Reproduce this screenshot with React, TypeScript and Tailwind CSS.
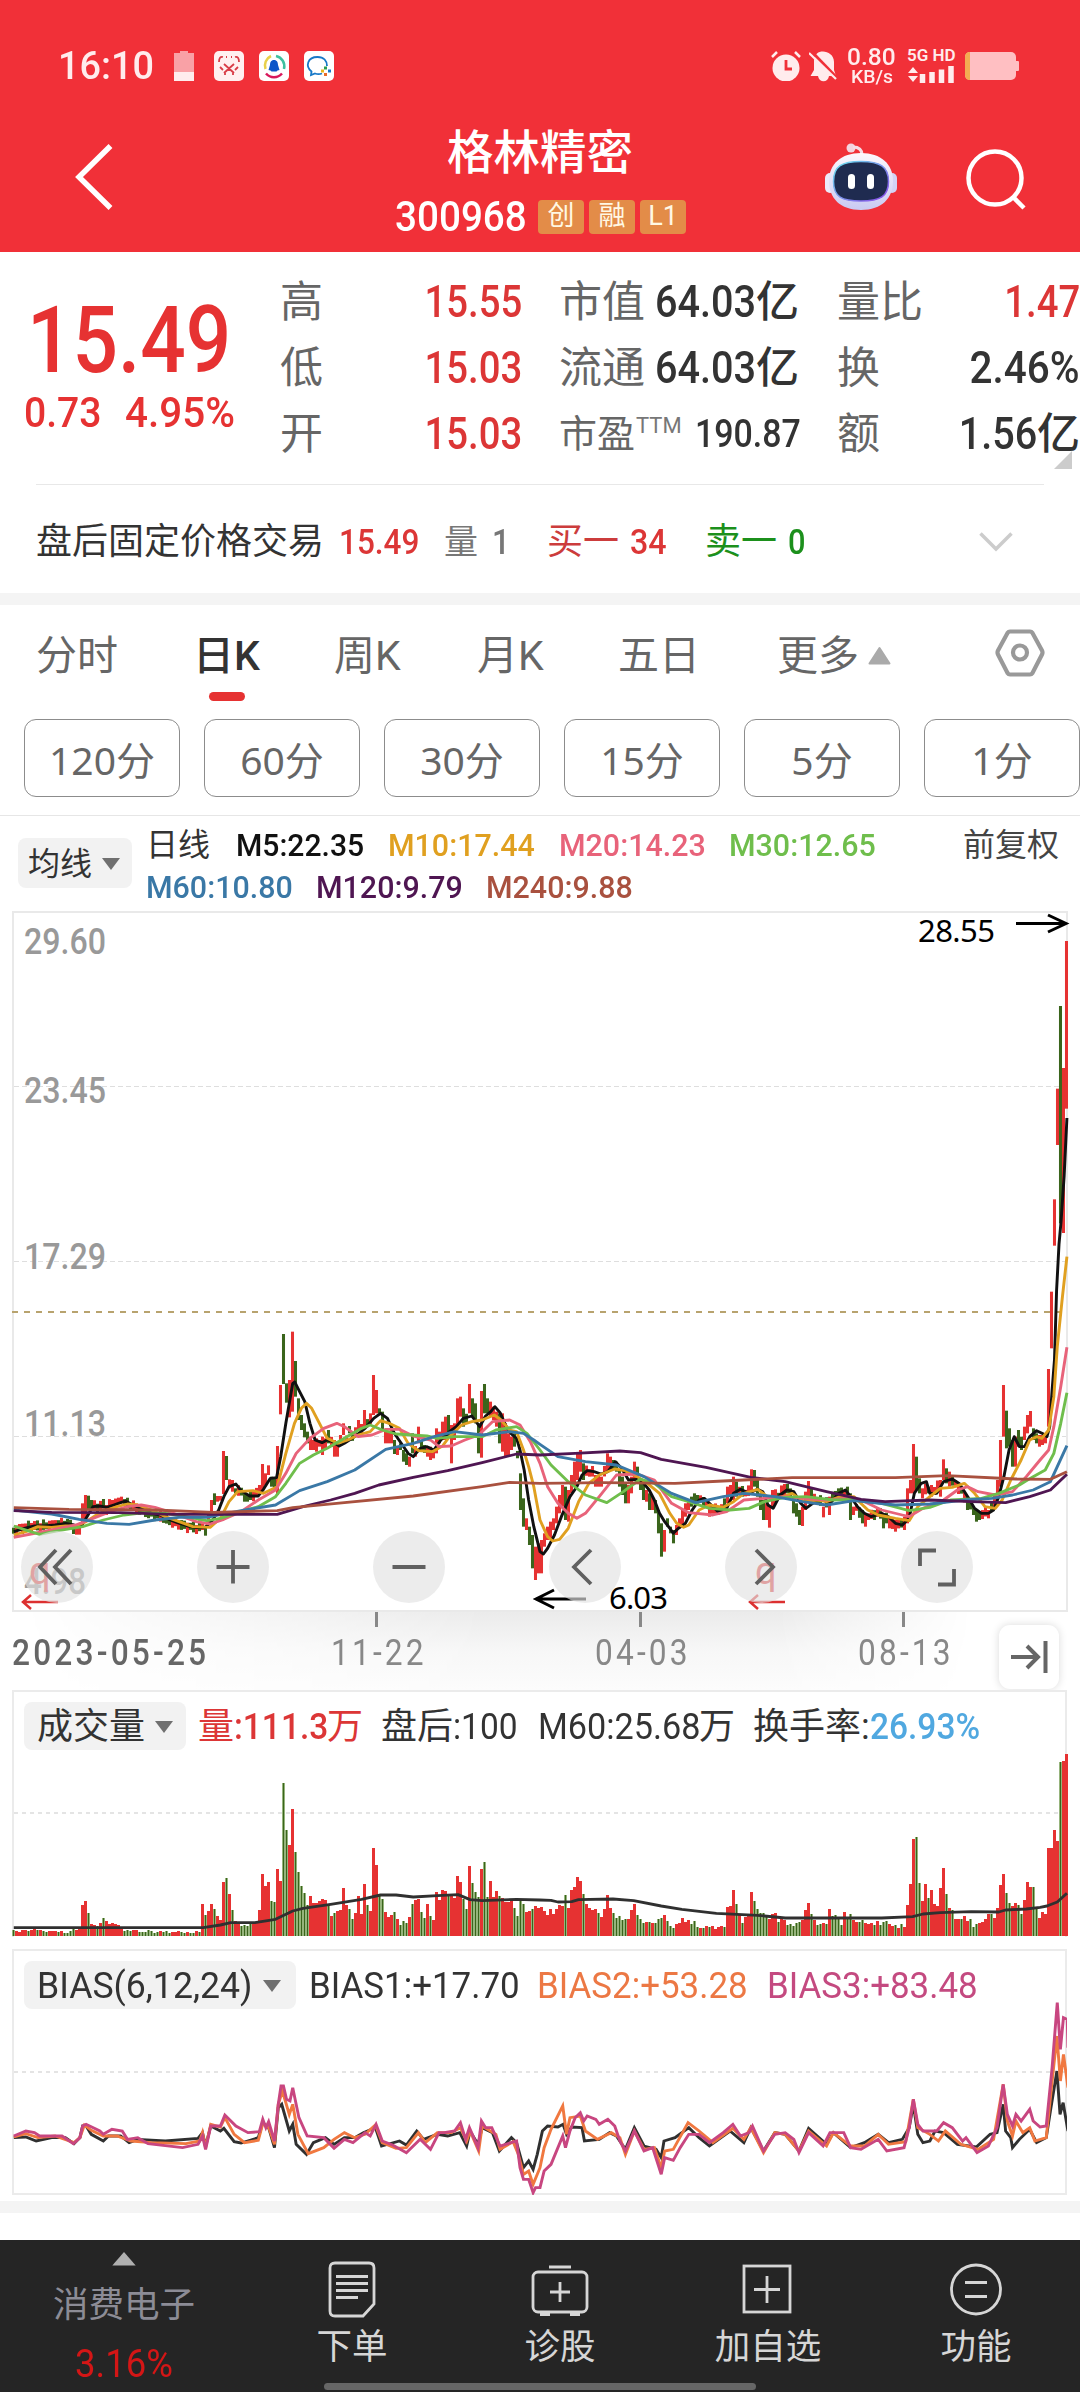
import React from 'react';
import clsx from 'clsx';

type Bar = [index: number, top: number, bottom: number, down?: 1];

// 图表坐标系：横向每单位 0.3444px，纵向每单位 1/3px
const UNIT_X = 0.34439;
const UNIT_Y = 1 / 3;
const BAR_STEP = 8.711;
const BAR_START = 39.2;
const BAR_COUNT = 352;

const RED = '#e63232';
const GREEN = '#3a651c';

const MA5 =
  '40,755 70,745 100,738 130,738 160,735 190,730 215,735 235,740 250,715 270,680 290,678 310,682 330,675 350,668 365,663 385,675 410,685 440,700 465,705 490,718 515,728 545,738 570,743 595,742 615,725 635,690 650,650 665,620 685,612 700,632 725,648 750,648 765,628 785,595 803,593 815,530 830,430 850,310 856,306 870,335 885,365 900,430 915,480 935,488 950,480 965,485 985,498 1000,490 1030,470 1060,445 1085,415 1105,400 1125,415 1145,460 1165,490 1185,520 1200,530 1220,505 1240,500 1260,510 1280,480 1305,455 1325,440 1345,415 1370,408 1393,440 1410,408 1425,395 1437,380 1452,398 1470,440 1485,462 1500,475 1510,510 1522,570 1535,660 1550,740 1568,815 1578,822 1590,805 1610,765 1630,710 1655,650 1675,620 1690,585 1705,572 1725,575 1745,582 1765,575 1787,545 1805,565 1825,600 1850,598 1865,605 1885,630 1900,660 1915,700 1930,725 1945,745 1955,760 1970,745 1990,730 2010,690 2030,660 2045,655 2065,675 2085,695 2110,685 2130,640 2150,628 2175,640 2200,628 2215,635 2230,675 2245,685 2265,645 2285,630 2305,635 2325,670 2340,685 2360,670 2380,655 2400,665 2415,665 2435,640 2455,630 2470,650 2490,680 2510,700 2530,710 2560,700 2580,710 2600,730 2620,735 2640,715 2655,640 2675,610 2690,605 2700,640 2720,640 2740,605 2765,597 2785,610 2810,650 2830,685 2850,700 2870,700 2885,690 2900,650 2915,590 2930,510 2945,470 2960,500 2975,500 2990,470 3010,452 3030,462 3040,470 3048,440 3055,330 3062,238 3068,31 3075,-107 3081,-176 3090,-313 3098,-486';

const MA_LINES = [
  {
    name: 'MA10',
    color: '#e0a020',
    points:
      '40,765 75,755 110,740 150,742 190,738 220,738 250,725 280,705 310,690 340,680 370,672 400,675 440,690 480,710 520,725 560,740 610,742 640,715 665,665 690,635 735,632 765,640 805,620 830,520 855,430 875,385 890,370 905,385 925,425 950,475 980,490 1010,480 1040,465 1075,455 1105,422 1130,430 1160,445 1185,490 1215,512 1255,515 1285,498 1305,470 1340,435 1370,425 1400,420 1435,405 1455,420 1480,450 1500,455 1520,510 1535,560 1550,620 1568,720 1590,770 1605,783 1625,778 1650,745 1680,665 1710,610 1740,585 1785,567 1815,572 1850,590 1880,610 1915,640 1945,700 1965,730 1985,742 2000,735 2030,690 2060,675 2100,682 2130,665 2160,640 2200,628 2235,655 2275,650 2300,640 2335,665 2375,660 2400,665 2440,650 2480,650 2520,690 2550,705 2600,715 2640,722 2665,680 2700,650 2730,625 2765,622 2800,610 2830,640 2860,680 2890,685 2910,660 2935,600 2965,540 2990,480 3010,470 3025,475 3045,450 3060,350 3070,200 3085,50 3098,-70',
  },
  {
    name: 'MA20',
    color: '#e8637a',
    points:
      '40,772 90,762 150,750 220,735 270,715 320,695 370,680 410,675 450,682 490,695 530,710 570,725 610,732 650,718 700,695 750,660 800,630 830,580 860,520 900,475 940,445 978,430 1000,440 1040,470 1080,465 1120,448 1160,448 1200,468 1250,480 1275,500 1310,498 1350,480 1390,465 1430,425 1480,420 1510,435 1540,485 1568,550 1590,620 1620,670 1650,700 1675,715 1700,700 1740,650 1790,585 1850,582 1900,600 1950,670 2000,698 2070,705 2110,695 2160,660 2220,655 2280,650 2330,655 2400,660 2450,655 2500,660 2560,690 2620,705 2640,710 2680,685 2740,660 2780,630 2810,620 2840,635 2890,645 2940,635 2980,590 3020,540 3045,510 3060,440 3080,320 3098,202',
  },
  {
    name: 'MA30',
    color: '#6fbe4c',
    points:
      '40,738 80,752 115,763 170,752 240,740 300,720 360,705 420,698 480,700 540,710 600,722 640,715 700,695 750,680 800,650 830,610 870,550 910,525 950,505 1000,475 1050,445 1075,435 1110,450 1150,462 1240,468 1270,475 1320,470 1400,470 1440,450 1500,440 1530,460 1568,510 1600,555 1650,605 1700,645 1762,668 1810,635 1860,597 1900,610 1950,650 2000,665 2060,685 2120,690 2175,685 2220,665 2280,652 2340,650 2420,660 2480,658 2560,670 2640,692 2700,682 2760,660 2850,655 2900,640 2960,615 3000,590 3035,570 3060,520 3080,430 3098,338',
  },
  {
    name: 'MA60',
    color: '#3a78a6',
    points:
      '40,690 150,702 230,718 310,730 375,733 450,720 520,712 600,712 700,692 800,675 870,632 950,605 1030,570 1120,508 1200,490 1260,470 1320,455 1400,465 1480,455 1520,460 1550,480 1568,493 1620,530 1700,545 1790,555 1870,590 1950,640 2020,668 2100,650 2160,640 2250,650 2330,665 2400,675 2480,662 2600,675 2700,672 2800,660 2880,655 2940,645 3000,630 3050,605 3070,560 3098,497',
  },
  {
    name: 'MA120',
    color: '#4f1652',
    points:
      '40,692 150,697 350,698 500,703 700,703 805,703 880,680 960,660 1030,640 1100,615 1200,592 1300,572 1400,548 1500,522 1568,525 1670,520 1800,513 1860,518 1920,538 2050,562 2180,592 2280,605 2400,635 2500,658 2570,665 2700,660 2820,665 2920,668 2990,650 3050,630 3098,583',
  },
  {
    name: 'MA240',
    color: '#a9513f',
    points:
      '40,683 200,688 450,690 620,697 805,692 850,683 1000,668 1200,648 1400,620 1480,607 1568,610 1750,608 1960,610 2100,603 2300,593 2600,593 2750,587 2950,597 3050,598 3098,575',
  },
];

// 波动较大的 K 线，其余按 MA5 走势生成
const KEY_CANDLES: Bar[] = [
  [20, 735, 762, 1], [21, 740, 764], [22, 735, 764], [23, 670, 740], [24, 645, 720], [25, 647, 690, 1], [26, 660, 690, 1], [30, 657, 685, 1], [31, 675, 705], [33, 660, 690], [36, 650, 670],
  [61, 735, 762], [64, 738, 767, 1], [66, 660, 710], [67, 640, 675, 1], [68, 648, 665], [69, 648, 662], [70, 513, 642], [71, 528, 600, 1], [72, 598, 625], [73, 600, 635], [74, 625, 640, 1], [77, 640, 665, 1], [78, 645, 665, 1], [82, 615, 640], [83, 552, 630], [84, 580, 615], [85, 556, 585], [86, 590, 620, 1], [87, 595, 625, 1],
  [88, 498, 645], [89, 315, 403], [90, 162, 312, 1], [91, 310, 368, 1], [92, 300, 412], [93, 155, 395], [94, 243, 350, 1], [95, 355, 420, 1], [96, 405, 450, 1], [97, 430, 472, 1], [98, 455, 490, 1], [99, 470, 510], [100, 480, 510], [101, 475, 515], [102, 480, 500], [103, 470, 525], [104, 475, 505], [105, 450, 490, 1], [107, 480, 530], [108, 495, 530], [109, 465, 480], [110, 430, 465], [112, 438, 460, 1], [115, 420, 450], [117, 390, 440],
  [120, 285, 405], [121, 330, 400], [122, 385, 400, 1], [123, 395, 450, 1], [124, 450, 490], [125, 455, 490], [126, 450, 490], [127, 480, 522, 1], [128, 500, 525], [129, 490, 510, 1], [130, 510, 545, 1], [131, 520, 555, 1], [132, 530, 560], [133, 460, 520, 1], [135, 440, 490], [138, 500, 530], [139, 500, 540], [140, 515, 535], [141, 445, 520], [142, 455, 490], [143, 425, 480], [144, 410, 480], [145, 405, 470, 1], [146, 435, 550], [147, 430, 480], [148, 355, 440], [149, 350, 410], [150, 385, 440, 1],
  [152, 312, 400], [153, 355, 410, 1], [154, 370, 430, 1], [155, 430, 520, 1], [156, 333, 533], [157, 312, 400, 1], [158, 355, 400, 1], [159, 365, 410], [160, 380, 420], [161, 395, 440], [162, 400, 490, 1], [163, 400, 515], [164, 430, 530], [165, 460, 525], [166, 470, 510], [167, 460, 500, 1],
  [169, 580, 690, 1], [170, 655, 740, 1], [171, 715, 750], [172, 740, 795, 1], [173, 765, 865, 1], [174, 800, 900], [175, 790, 880], [176, 780, 880], [177, 760, 800], [178, 740, 780], [179, 725, 775], [180, 715, 750], [181, 680, 730], [182, 645, 700], [183, 615, 680], [184, 620, 720, 1], [185, 630, 725], [186, 585, 640], [187, 545, 620], [188, 520, 600], [189, 510, 575], [190, 550, 600, 1], [194, 585, 620], [195, 585, 620], [196, 590, 620], [198, 520, 575], [199, 530, 570], [200, 540, 570, 1], [201, 545, 575, 1], [202, 570, 620, 1], [203, 590, 645, 1], [204, 610, 670, 1], [205, 615, 670], [206, 590, 640], [207, 545, 600], [208, 560, 600, 1], [209, 600, 630, 1], [210, 610, 660, 1], [211, 630, 665], [212, 640, 690, 1], [213, 650, 690], [214, 660, 700, 1], [215, 690, 760, 1], [216, 730, 830, 1], [217, 750, 815], [218, 715, 740, 1], [219, 740, 760, 1], [220, 750, 790, 1], [221, 735, 765], [222, 715, 745], [223, 690, 735], [224, 670, 710], [225, 660, 690], [226, 650, 680, 1], [227, 640, 665, 1], [228, 645, 665, 1], [232, 670, 710],
  [238, 620, 670], [239, 615, 650], [240, 590, 660], [241, 605, 650, 1], [246, 568, 630], [247, 570, 620, 1], [248, 600, 650, 1], [249, 640, 690, 1], [250, 660, 720, 1], [251, 670, 720], [252, 680, 743], [253, 630, 680], [254, 628, 670], [257, 612, 650], [258, 612, 640, 1], [260, 650, 700, 1], [261, 670, 710, 1], [262, 690, 735, 1], [263, 680, 738], [264, 635, 690], [265, 603, 650], [266, 625, 660, 1], [270, 680, 712], [272, 650, 705], [275, 625, 660, 1], [278, 620, 660, 1], [279, 640, 720, 1], [280, 680, 705], [283, 690, 730, 1], [284, 700, 740], [285, 700, 720], [288, 685, 710], [290, 700, 745, 1], [292, 715, 745], [294, 720, 755], [297, 710, 750], [298, 625, 730], [299, 600, 640],
  [300, 492, 640], [301, 530, 630, 1], [302, 595, 640, 1], [303, 625, 655], [306, 615, 650], [309, 600, 650], [310, 538, 600], [311, 565, 610, 1], [312, 575, 620], [318, 650, 690, 1], [320, 680, 705, 1], [321, 690, 725, 1], [322, 695, 720, 1], [325, 690, 715], [327, 640, 680], [328, 600, 660], [329, 480, 620], [330, 315, 470], [331, 392, 505, 1], [332, 445, 500, 1], [333, 480, 560, 1], [334, 470, 560], [335, 450, 500, 1], [336, 470, 510, 1], [337, 440, 480], [338, 405, 460], [339, 393, 440], [340, 445, 480, 1], [341, 460, 490, 1], [342, 465, 500], [343, 465, 495], [344, 460, 490],
  [345, 267, 440], [346, 35, 205], [347, -242, -103], [348, -574, -405], [349, -822, -170, 1], [350, -636, -141], [351, -1017, -514],
];

// 成交量柱高，负数为阴线
const VOLUMES = [
  -6, 5, 4, 6, 6, -5, 6, 7, -6, 6, -5, -4, 5, 5, 5, -4, 5, -3, -3, -5, -7, 6, 7, 31, 35, -23, 12, 11, -10, 13, -18, 15, 12, 13, 12, 11, 9, -5, -6, -5, 6, 6, -4, -4, -4, -6, -5, -3, -4, 5, -4, -5, -3, 4, 4, 5, -4, -3, 4, -3, -3, 5, -4,
  32, -21, 25, 32, -27, 20, 16, 54, -58, 42, -26, 15, 14, -10, -11, -10, -12, 13, 14, 26, 62, 50, 54, -35, -34, 67, 55, -153, -106, 91, 127, -84, -64, -50, -43, -31, 40, 33, 33, 35, 37, 36, -31, 20, -23, 25, 26, 48, 31, -27, -17, 23, 40, 22, 52, -31, 25, 88, 71, -41, -37, 24, 19, 21, -24, 17, -11, -15, -13, 19, -32, 36, 37, -24, -18, 32, -20, 16, 44, 36, 46, 45, -42, 41, 38, 60, 54, -37, -27, 70, -53, -44, -39, 67, -74, -39, 55, 39, 45, -40, 38, 34, 34, 36, -28, -20, -35, -32, 24, 25, -27, 30, 28,
  29, 25, 21, 27, 22, 27, 31, 30, -41, 28, 46, 49, 59, 55, -42, 32, 28, 26, 27, -23, 19, 27, 41, 28, -23, -18, -20, -16, -17, 17, 26, 32, -21, -17, -13, 14, -14, 13, -13, -17, -18, 21, -15, -10, -8, 12, 13, 18, 14, 16, -12, -15, -9, 8, -8, 10, -9, 10, 7, 9, 10, -9, 29, 30, 46, -32, 21, -13, 19, 21, 44, -35, -27, -23, -23, -21, 17, 22, 23, -14, 18, 16, -11, -12, -10, -13, -14, 16, 26, 33, -22, 16, -11, -12, 13, -12, 27, -20, -21, -17, -11, 24, -19, -22, 16, 14, -14, -16, 13, 12, 13, -11, 15, -11, -14, -15, 12, 10, -11, 8, -12, 9, 31, 52,
  97, -99, -53, 35, 52, -38, 46, 32, 30, 48, 68, -42, 28, -26, 17, 17, -17, 20, 15, -17, -9, -12, 13, 14, 17, 22, -22, 18, 28, 51, 62, -43, -33, 30, 33, -31, -22, 36, 54, 49, -49, -27, 18, 24, 22, 88, 88, 106, 95, -174, 175, 182,
];

const VOLUME_MA =
  '40,713 590,713 640,705 670,698 740,698 800,688 850,663 880,655 960,643 1050,628 1105,615 1150,615 1200,621 1270,617 1330,614 1365,629 1400,632 1500,628 1568,630 1600,631 1620,636 1660,635 1680,629 1780,627 1840,632 1920,648 1980,658 2080,670 2200,676 2280,684 2560,684 2650,680 2680,672 2730,668 2820,665 2900,666 2920,660 2980,657 3020,652 3040,648 3070,636 3098,610';

const BIAS_LINES = [
  {
    name: 'BIAS1',
    color: '#303030',
    points:
      '40,1340 75,1338 105,1350 150,1340 190,1340 215,1358 232,1340 240,1305 250,1305 265,1330 300,1350 315,1335 350,1335 375,1355 400,1345 480,1350 575,1342 588,1325 597,1365 612,1305 640,1320 650,1312 680,1352 700,1356 750,1340 763,1295 780,1310 797,1370 808,1250 818,1240 840,1320 850,1300 860,1360 890,1390 910,1355 945,1340 970,1360 1000,1340 1030,1340 1055,1325 1090,1310 1108,1365 1160,1350 1180,1362 1210,1320 1230,1345 1270,1330 1300,1335 1335,1325 1355,1365 1365,1320 1388,1360 1400,1310 1430,1325 1450,1380 1485,1340 1500,1355 1520,1430 1535,1410 1548,1435 1560,1390 1575,1320 1590,1305 1620,1308 1635,1300 1645,1330 1660,1308 1690,1310 1697,1350 1740,1345 1770,1325 1790,1335 1816,1375 1842,1310 1870,1365 1905,1375 1920,1400 1928,1350 1960,1340 2000,1310 2030,1340 2060,1365 2120,1320 2160,1355 2180,1310 2217,1380 2250,1325 2280,1330 2320,1380 2348,1312 2400,1360 2420,1325 2470,1370 2510,1355 2550,1330 2580,1355 2620,1345 2640,1310 2652,1240 2665,1330 2680,1355 2700,1350 2715,1320 2740,1325 2780,1360 2835,1368 2875,1330 2895,1325 2913,1240 2920,1320 2935,1340 2940,1370 2960,1345 2990,1315 3010,1355 3038,1340 3050,1260 3069,1140 3078,1270 3087,1235 3101,1320',
  },
  {
    name: 'BIAS2',
    color: '#f07840',
    points:
      '40,1338 75,1328 110,1340 160,1335 215,1355 232,1340 245,1302 265,1318 300,1335 340,1335 380,1350 440,1355 540,1358 580,1350 588,1325 597,1370 612,1300 640,1308 653,1280 680,1330 710,1355 750,1348 763,1298 780,1308 797,1360 808,1240 820,1200 840,1270 850,1240 865,1330 895,1388 940,1370 970,1345 1000,1325 1030,1340 1060,1330 1090,1302 1110,1355 1150,1372 1180,1370 1215,1325 1235,1355 1270,1325 1310,1325 1337,1310 1355,1350 1365,1320 1390,1380 1400,1305 1440,1330 1452,1375 1490,1352 1505,1390 1520,1450 1535,1440 1548,1480 1568,1430 1580,1370 1600,1315 1634,1245 1645,1330 1655,1280 1685,1275 1700,1320 1735,1345 1775,1325 1800,1340 1816,1390 1842,1320 1870,1375 1900,1370 1920,1430 1930,1380 1955,1375 1998,1295 2030,1320 2070,1355 2128,1312 2160,1345 2180,1310 2217,1385 2250,1325 2280,1330 2320,1380 2348,1320 2400,1365 2420,1325 2470,1365 2510,1365 2550,1330 2580,1360 2630,1352 2652,1225 2665,1310 2700,1330 2725,1350 2745,1320 2790,1360 2840,1375 2885,1345 2913,1180 2925,1290 2940,1335 2950,1290 2970,1325 2990,1310 3005,1350 3038,1340 3050,1220 3069,1035 3079,1170 3088,1090 3101,1190',
  },
  {
    name: 'BIAS3',
    color: '#c84680',
    points:
      '40,1335 75,1320 100,1325 115,1335 180,1335 213,1358 232,1340 240,1305 250,1300 290,1320 300,1330 325,1315 355,1320 370,1345 400,1340 430,1358 530,1370 575,1360 588,1335 597,1375 612,1305 640,1305 653,1272 685,1305 720,1325 753,1322 763,1285 772,1310 780,1292 797,1350 808,1240 816,1185 823,1185 832,1225 842,1230 850,1190 868,1280 892,1335 940,1340 970,1372 1000,1345 1025,1355 1060,1325 1075,1335 1092,1300 1110,1350 1140,1362 1180,1385 1220,1345 1250,1375 1275,1325 1290,1325 1320,1320 1337,1295 1352,1345 1363,1310 1388,1370 1398,1290 1410,1310 1428,1310 1452,1365 1500,1350 1510,1430 1520,1465 1535,1465 1548,1505 1555,1490 1568,1490 1580,1440 1600,1420 1634,1335 1642,1370 1655,1320 1670,1280 1685,1265 1695,1290 1705,1275 1730,1285 1740,1300 1765,1285 1785,1305 1800,1350 1816,1380 1842,1320 1870,1380 1895,1370 1920,1450 1930,1400 1955,1408 1975,1370 2000,1330 2030,1330 2060,1355 2100,1325 2128,1300 2150,1335 2175,1325 2185,1305 2217,1380 2250,1330 2280,1325 2305,1345 2320,1385 2348,1325 2390,1365 2410,1325 2450,1325 2470,1370 2500,1375 2550,1345 2575,1380 2625,1370 2640,1310 2652,1225 2665,1300 2680,1320 2720,1320 2740,1295 2765,1310 2795,1350 2805,1340 2837,1385 2870,1365 2895,1310 2913,1180 2925,1270 2940,1305 2950,1270 2965,1290 2990,1255 3000,1290 3020,1308 3038,1305 3055,1130 3070,935 3079,1075 3088,980 3099,985 3101,1070',
  },
];

const parsePoints = (points: string) => points.split(' ').map((p) => p.split(',').map(Number));
const ma5Points = parsePoints(MA5);

const ma5At = (x: number) => {
  const next = ma5Points.findIndex((p) => p[0] >= x);
  if (next <= 0) return ma5Points[0][1];
  const [x0, y0] = ma5Points[next - 1];
  const [x1, y1] = ma5Points[next];
  return y0 + ((y1 - y0) * (x - x0)) / (x1 - x0);
};

const buildCandles = (): Bar[] => {
  const keys = new Map(KEY_CANDLES.map((c) => [c[0], c]));
  return Array.from({ length: BAR_COUNT }, (_, i) => {
    const key = keys.get(i);
    if (key) return key;
    const x = BAR_START + i * BAR_STEP;
    const mid = ma5At(x) + 0.5 * (ma5At(x + 18) - ma5At(x)) + Math.sin(i * 2.3) * 4;
    const half = 9 + Math.abs(Math.sin(i * 1.7)) * 7;
    return VOLUMES[i] < 0 ? [i, mid - half, mid + half, 1] : [i, mid - half, mid + half];
  });
};

const candles = buildCandles();

interface TextProps {
  children: React.ReactNode;
  className?: string;
}

// 窄体数字
const Num: React.FC<TextProps> = ({ children, className }) => (
  <span className={clsx('inline-block whitespace-nowrap', className)}>{children}</span>
);

const StatusBar: React.FC = () => (
  <div className="flex h-[130px] items-center pt-0.5 text-[#ffeced]">
    <div className="ml-[58px] w-[116px] font-medium">
      <Num className="origin-left scale-x-[0.97] text-[39px]">16:10</Num>
    </div>
    <svg width="20" height="30" viewBox="0 0 20 30">
      <path d="M0 2h6V0h8v2h6v28H0z" fill="#f9a1a6" />
      <path d="M0 21h20v9H0z" fill="#ffeced" />
    </svg>
    <svg className="ml-5" width="30" height="30" viewBox="0 0 30 30">
      <rect width="30" height="30" rx="5" fill="#fff0f0" />
      <path d="M5 11Q5 5 9 6M25 11Q25 5 21 6M12 6h1M17 6h1" stroke="#d83c46" strokeWidth="1.800" fill="none" />
      <path d="M10 13l10 9M20 13l-10 9M6 16l3 3M24 16l-3 3M15 17v3M11 22v2M19 22v2" stroke="#d83c46" strokeWidth="1.800" fill="none" />
    </svg>
    <svg className="ml-[15px]" width="30" height="30" viewBox="0 0 30 30">
      <rect width="30" height="30" rx="5" fill="#fff" />
      <path d="M12 5a10.500 10.500 0 0 0-5.500 13" stroke="#e8d04a" strokeWidth="2.500" fill="none" />
      <path d="M17 5a10.500 10.500 0 0 1 8 13" stroke="#3fc0a0" strokeWidth="2.500" fill="none" />
      <path d="M7 22.500a10.500 10.500 0 0 0 16 0" stroke="#d8185c" strokeWidth="2.500" fill="none" />
      <path d="M15 9c-3 0-4 2.500-4 5l-1.500 5 2 .5 1 1h5l1-1 2-.5L19 14c0-2.500-1-5-4-5z" fill="#0c55c8" />
    </svg>
    <svg className="ml-[15px]" width="30" height="30" viewBox="0 0 30 30">
      <rect width="30" height="30" rx="5" fill="#fff" />
      <path d="M18 22.500c-2 .8-5 .8-7 0L7 24l.5-3.500C1 15 3.500 6 13.500 6 20 6 23 10 23 15" stroke="#1678c8" strokeWidth="1.800" fill="none" />
      <path d="M21.500 15.500v3" stroke="#2a9d50" strokeWidth="3" />
      <path d="M24 20h3" stroke="#1678c8" strokeWidth="3" />
      <path d="M21.500 22v3" stroke="#e86c28" strokeWidth="3" />
      <path d="M17 20h3" stroke="#e8b820" strokeWidth="3" />
    </svg>
    <svg className="ml-[437px]" width="30" height="30" viewBox="0 0 30 30">
      <circle cx="15" cy="17" r="13.500" fill="#ffeced" />
      <path d="M1 6l5-5M29 6l-5-5" stroke="#ffeced" strokeWidth="2.500" />
      <path d="M15 9v9h6" stroke="#f03038" strokeWidth="2.800" fill="none" />
    </svg>
    <svg className="ml-2" width="28" height="31" viewBox="0 0 28 31">
      <path d="M5 9C6 3 9 .5 14 .5S25 4 25 11v8l2 6H1.500L5 19z" fill="#ffeced" />
      <path d="M9 25h11c-1 7-10 7-11 0z" fill="#ffeced" />
      <path d="M2 0l26 27" stroke="#f03038" strokeWidth="3" />
      <path d="M0 2l27 26" stroke="#ffeced" strokeWidth="2.200" />
    </svg>
    <div className="ml-2.5 flex w-[60px] flex-col font-medium">
      <Num className="origin-left scale-x-[1.02] text-[24px] leading-[20px]">0.80</Num>
      <Num className="ml-1 origin-left scale-x-[1.02] text-[19px] leading-[19px]">KB/s</Num>
    </div>
    <div className="flex w-[58px] flex-col gap-1 font-semibold">
      <Num className="text-[17px] leading-[13px]">5G HD</Num>
      <svg width="49" height="17" viewBox="0 0 49 17">
        <path d="M1 7l5-6 5 6zM1 10h10l-5 6z" fill="#ffeced" />
        <path d="M15.500 8v9M25 6v11M34.500 3.500V17M44 0v17" stroke="#ffeced" strokeWidth="5.500" />
      </svg>
    </div>
    <svg width="54" height="28" viewBox="0 0 54 28">
      <rect width="51" height="28" rx="5" fill="#ffbfc2" />
      <path d="M5 0Q0 0 0 5v18q0 5 5 5z" fill="#f3ac52" />
      <rect x="50" y="9" width="4" height="10" rx="1" fill="#ffbfc2" />
    </svg>
  </div>
);

const RobotIcon: React.FC = () => (
  <svg width="72" height="68" viewBox="0 0 72 68">
    <defs>
      <linearGradient id="robot-head" x1="0" y1="0" x2="0" y2="1">
        <stop offset="0" stopColor="#fdf8fd" />
        <stop offset="1" stopColor="#c9caf2" />
      </linearGradient>
      <linearGradient id="robot-rim" x1="0" y1="0" x2="1" y2="1">
        <stop offset="0" stopColor="#6be4f0" />
        <stop offset="1" stopColor="#8a45e8" />
      </linearGradient>
    </defs>
    <circle cx="26" cy="5" r="4.500" fill="#f3d3de" />
    <path d="M28 4q9 0 9 8" stroke="#f6dbe4" strokeWidth="3" fill="none" />
    <rect x="0" y="30" width="10" height="20" rx="5" fill="#eceafa" />
    <rect x="62" y="30" width="10" height="20" rx="5" fill="#d3d3f5" />
    <path d="M36 10c20 0 32 11 32 28S57 67 36 67 4 55 4 38s12-28 32-28z" fill="url(#robot-head)" />
    <path d="M36 18.500c19 0 27.500 5 27.500 20S55 58 36 58 8.500 54 8.500 38.500s8.500-20 27.500-20z" fill="#1f2b50" stroke="url(#robot-rim)" strokeWidth="1.500" />
    <rect x="23" y="31" width="7" height="15" rx="3.500" fill="#fff" />
    <rect x="42" y="31" width="7" height="15" rx="3.500" fill="#fff" />
  </svg>
);

const Header: React.FC = () => (
  <div className="h-[252px] shrink-0 bg-[#f13038] text-white">
    <StatusBar />
    <div className="flex">
      <div className="w-[395px] pt-[14px] pl-[75px]">
        <svg width="40" height="66" viewBox="0 0 40 66">
          <path d="M35.500 2L4 33l31.500 31" stroke="#fff" strokeWidth="5.500" fill="none" />
        </svg>
      </div>
      <div className="w-[430px]">
        <div className="pl-[52px] text-[46.500px] font-medium">格林精密</div>
        <div className="mt-[22px] flex h-9 items-center gap-[5px]">
          <div className="w-[138px] font-medium">
            <Num className="origin-left scale-x-[0.92] text-[42px]">300968</Num>
          </div>
          {['创', '融', 'L1'].map((badge) => (
            <span key={badge} className="flex h-[34px] w-[46px] items-center justify-center rounded-[4px] bg-[#e38c48] text-[27px] text-[#fff8e4]">
              {badge}
            </span>
          ))}
        </div>
      </div>
      <div className="pt-[13px]">
        <RobotIcon />
      </div>
      <svg className="mt-[17px] ml-[68px]" width="62" height="64" viewBox="0 0 62 64">
        <circle cx="30" cy="31" r="26.500" stroke="#fff" strokeWidth="4.500" fill="none" />
        <path d="M48 50l11 11" stroke="#fff" strokeWidth="4.500" />
      </svg>
    </div>
  </div>
);

const Yi: React.FC = () => <span className="text-[43px] font-medium text-[#333]">亿</span>;

const QuoteSummary: React.FC = () => (
  <div className="relative flex h-[232px] shrink-0 pt-[17px] font-medium">
    <div className="w-[280px] text-[#e63232]">
      <div className="pt-[26px] pl-[27px]">
        <Num className="origin-left scale-x-[0.87] text-[92px]">15.49</Num>
      </div>
      <div className="mt-1 flex pl-[24px]">
        <div className="w-[101px]">
          <Num className="origin-left scale-x-[0.91] text-[43px]">0.73</Num>
        </div>
        <Num className="origin-left scale-x-[0.94] text-[43px]">4.95%</Num>
      </div>
    </div>
    <div className="flex w-[242px] flex-col">
      {[['高', '15.55'], ['低', '15.03'], ['开', '15.03']].map(([label, value]) => (
        <div key={label} className="flex h-[66px] items-center justify-between">
          <span className="text-[43px] font-normal text-[#666]">{label}</span>
          <Num className="origin-right scale-x-[0.87] text-[44px] text-[#dc3636]">{value}</Num>
        </div>
      ))}
    </div>
    <div className="ml-[37px] flex w-[278px] flex-col text-[#333]">
      {['市值', '流通'].map((label) => (
        <div key={label} className="flex h-[66px] items-center">
          <span className="w-[96px] text-[43px] font-normal text-[#666]">{label}</span>
          <div className="w-[101px]">
            <Num className="origin-left scale-x-[0.9] text-[44px]">64.03</Num>
          </div>
          <Yi />
        </div>
      ))}
      <div className="flex h-[66px] items-center">
        <span className="w-[77px] text-[38px] font-normal whitespace-nowrap text-[#666]">市盈</span>
        <span className="-mt-4 w-[59px] text-[22px] font-normal text-[#777]">TTM</span>
        <Num className="origin-left scale-x-[0.87] text-[39px]">190.87</Num>
      </div>
    </div>
    <div className="flex w-[243px] flex-col text-[#333]">
      <div className="flex h-[66px] items-center justify-between">
        <span className="text-[43px] font-normal text-[#666]">量比</span>
        <Num className="origin-right scale-x-[0.87] text-[44px] text-[#dc3636]">1.47</Num>
      </div>
      <div className="flex h-[66px] items-center justify-between">
        <span className="text-[43px] font-normal text-[#666]">换</span>
        <Num className="origin-right scale-x-[0.92] text-[44px]">2.46%</Num>
      </div>
      <div className="flex h-[66px] items-center">
        <span className="flex-1 text-[43px] font-normal text-[#666]">额</span>
        <Num className="origin-right scale-x-[0.9] text-[44px]">1.56</Num>
        <Yi />
      </div>
    </div>
    <svg className="absolute right-2 bottom-[15px]" width="18" height="18">
      <path d="M18 0v18H0z" fill="#ccc" />
    </svg>
  </div>
);

const AfterHours: React.FC = () => (
  <div className="mx-9 flex h-[109px] shrink-0 items-center border-t-[1px] border-[#e8e8e8] pt-1.5 text-[36px] text-[#333]">
    <span className="w-[303px]">盘后固定价格交易</span>
    <div className="w-[105px] font-medium text-[#dc3636]">
      <Num className="origin-left scale-x-[0.9] text-[35px]">15.49</Num>
    </div>
    <span className="w-[48px] text-[34px] text-[#777]">量</span>
    <div className="w-[55px] font-medium text-[#777]">
      <Num className="origin-left scale-x-[0.9] text-[35px]">1</Num>
    </div>
    <span className="w-[83px] text-[#cc3c3c]">买一</span>
    <div className="w-[75px] font-medium text-[#dc3636]">
      <Num className="origin-left scale-x-[0.92] text-[35px]">34</Num>
    </div>
    <span className="w-[83px] text-[#1c901c]">卖一</span>
    <div className="w-[155px] font-medium text-[#1c901c]">
      <Num className="origin-left scale-x-[0.88] text-[35px]">0</Num>
    </div>
    <svg className="ml-[36px]" width="34" height="20" viewBox="0 0 34 20">
      <path d="M1.500 1.500L17 17 32.500 1.500" stroke="#ccc" strokeWidth="3.500" fill="none" />
    </svg>
  </div>
);

const PeriodTabs: React.FC = () => (
  <div className="flex h-[101px] shrink-0 pt-[31px] pl-9 text-[41px] text-[#666]">
    <span className="w-[157px]">分时</span>
    <div className="flex w-[141px] flex-col gap-[15px] font-medium text-[#333]">
      <span>日K</span>
      <span className="ml-4 h-[9px] w-9 rounded-full bg-[#e63232]" />
    </div>
    <span className="w-[143px]">周K</span>
    <span className="w-[141px]">月K</span>
    <span className="w-[159px]">五日</span>
    <span className="w-[91px]">更多</span>
    <svg className="mt-2.5" width="23" height="19" viewBox="0 0 23 19">
      <path d="M11.500 2L21.500 17.500h-20z" fill="#aaa" stroke="#aaa" strokeWidth="2" strokeLinejoin="round" />
    </svg>
    <svg className="-mt-[7px] ml-[104px]" width="50" height="48" viewBox="0 0 50 48">
      <path d="M15 2.500h20q1.500 0 2.500 1.500l9.500 17.500q1 2 0 4L37.500 44q-1 1.500-2.500 1.500H15q-1.500 0-2.500-1.500L3 25.500q-1-2 0-4L12.500 4Q13.500 2.500 15 2.500z" stroke="#999" strokeWidth="4.200" fill="none" />
      <circle cx="25" cy="23.500" r="7" stroke="#999" strokeWidth="4.200" fill="none" />
    </svg>
  </div>
);

const MinuteButtons: React.FC = () => (
  <div className="flex h-[110px] shrink-0 gap-6 border-b border-[#e6e6e6] pt-[13px] pl-6">
    {['120分', '60分', '30分', '15分', '5分', '1分'].map((label) => (
      <div key={label} className="flex h-[78px] w-[156px] shrink-0 items-center justify-center rounded-[12px] border border-[#8c8c8c] pt-0.5 font-['Noto_Sans','Noto_Sans_CJK_SC',sans-serif] text-[39px] text-[#666]">
        {label}
      </div>
    ))}
  </div>
);

const Caret: React.FC = () => (
  <svg width="18" height="12" viewBox="0 0 18 12">
    <path d="M0 0h18L9 12z" fill="#707070" />
  </svg>
);

const MaLegend: React.FC = () => (
  <div className="flex h-[95px] shrink-0 pt-[11px] text-[32px]">
    <div className="mt-[11px] ml-[18px] flex h-[50px] w-[114px] items-center gap-2.5 rounded-lg bg-[#f2f2f2] pt-0.5 pl-2.5 text-[#333]">
      <span>均线</span>
      <Caret />
    </div>
    <div className="mt-0.5 ml-[14px] flex flex-col gap-[10px]">
      <div className="flex text-[#333]">
        <span className="w-[90px]">日线</span>
        <div className="w-[152px] font-medium text-[#111]">
          <Num className="origin-left scale-x-[0.94]">M5:22.35</Num>
        </div>
        <div className="w-[171px] font-medium text-[#e0a020]">
          <Num className="origin-left scale-x-[0.95]">M10:17.44</Num>
        </div>
        <div className="w-[170px] font-medium text-[#e8637a]">
          <Num className="origin-left scale-x-[0.95]">M20:14.23</Num>
        </div>
        <div className="w-[234px] font-medium text-[#6fbe4c]">
          <Num className="origin-left scale-x-[0.95]">M30:12.65</Num>
        </div>
        <span className="text-[#444]">前复权</span>
      </div>
      <div className="flex font-medium">
        <div className="w-[170px] text-[#3a78a6]">
          <Num className="origin-left scale-x-[0.95]">M60:10.80</Num>
        </div>
        <div className="w-[170px] text-[#4f1652]">
          <Num className="origin-left scale-x-[0.95]">M120:9.79</Num>
        </div>
        <div className="text-[#a9513f]">
          <Num className="origin-left scale-x-[0.95]">M240:9.88</Num>
        </div>
      </div>
    </div>
  </div>
);

const PRICE_LABELS = [
  { text: '29.60', y: 43 },
  { text: '23.45', y: 192 },
  { text: '17.29', y: 358 },
  { text: '11.13', y: 525 },
  { text: '4.98', y: 683 },
];

const CONTROL_ICONS = [
  { name: 'rewind', d: 'M35 19L19 36l16 17M50 19L34 36l16 17' },
  { name: 'plus', d: 'M19.500 36h33M36 19v33.500' },
  { name: 'minus', d: 'M19.500 36h33' },
  { name: 'prev', d: 'M42 19L25 36l17 17' },
  { name: 'next', d: 'M31 19l17 17-17 17' },
  { name: 'expand', d: 'M19 35V19.500h16M53 38v15.500H37' },
];

const CandleChart: React.FC = () => (
  <div className="relative h-[701px] shrink-0">
    <svg className="overflow-visible" width="1080" height="701" viewBox="0 0 1080 701">
      <rect x="13" y="1" width="1054" height="699" stroke="#e9e9e9" strokeWidth="2" fill="none" />
      {[175, 350, 525].map((y) => (
        <path key={y} d={`M14 ${y}.5H1066`} stroke="#dedede" strokeDasharray="5 3" />
      ))}
      <path d="M12 401H1060" stroke="#b8a36e" strokeWidth="2" strokeDasharray="6 6" />
      {PRICE_LABELS.map(({ text, y }) => (
        <text key={text} x="24" y={y} fontSize="36" fontWeight="500" fill="#999" textLength={text.length === 5 ? 82 : 62} lengthAdjust="spacingAndGlyphs">
          {text}
        </text>
      ))}
      <g transform={`translate(0 369) scale(${UNIT_X} ${UNIT_Y})`} fill="none" strokeLinejoin="round">
        {candles.map(([i, top, bottom, down]) => (
          <rect key={i} x={BAR_START + i * BAR_STEP - 4.4} y={top} width="8.800" height={bottom - top} fill={down ? GREEN : RED} />
        ))}
        <polyline points={MA5} stroke="#111" strokeWidth="8.500" />
        {MA_LINES.map((line) => (
          <polyline key={line.name} points={line.points} stroke={line.color} strokeWidth="8.500" />
        ))}
      </g>
      <g fill="none" stroke="#000" strokeWidth="3">
        <path d="M1016 12.500h50M1048 4l18 8.500-18 8.500" />
        <path d="M586 688h-50M554 679l-18 9 18 9" />
      </g>
      <text x="918" y="31" fontSize="31" textLength="77" className="font-['Noto_Sans']">28.55</text>
      <text x="609" y="698" fontSize="31" textLength="59" className="font-['Noto_Sans']">6.03</text>
      <g fill="none" stroke="#dc3030" strokeWidth="2.500">
        <path d="M58 691H23M31 684l-8 7 8 7" />
        <path d="M785 691h-35M758 684l-8 7 8 7" />
      </g>
      <text x="29" y="673" fontSize="38" fill="#dc3030">q</text>
      <text x="755" y="673" fontSize="38" fill="#dc3030">q</text>
    </svg>
    <div className="absolute top-[620px] left-[21px] flex gap-[104px]">
      {CONTROL_ICONS.map((icon) => (
        <svg key={icon.name} width="72" height="72" viewBox="0 0 72 72">
          <circle cx="36" cy="36" r="36" fill="#e2e2e2" fillOpacity="0.650" />
          <path d={icon.d} stroke="#606060" strokeWidth="3.800" fill="none" />
        </svg>
      ))}
    </div>
  </div>
);

const DateAxis: React.FC = () => (
  <div className="relative h-[78px] shrink-0 overflow-hidden text-[36px] text-[#888]">
    <div className="absolute inset-0 bg-linear-to-b from-[#ebebeb] via-[#f7f7f7] to-[#fcfcfc] mask-[linear-gradient(to_right,transparent_2%,black_45%,black_72%,transparent_90%)]" />
    <div className="relative flex">
      <div className="w-[331px] shrink-0 pt-[23px] pl-3 font-medium text-[#666]">
        <Num className="origin-left scale-x-[0.88] tracking-[3.600px]">2023-05-25</Num>
      </div>
      {['11-22', '04-03', '08-13'].map((date) => (
        <div key={date} className="flex w-[263.500px] shrink-0 flex-col gap-2">
          <span className="ml-[44px] h-[15px] w-[3px] bg-[#888]" />
          <Num className="origin-left scale-x-[0.88] tracking-[3.600px]">{date}</Num>
        </div>
      ))}
    </div>
    <div className="absolute top-[13px] left-[999px] flex h-[64px] w-[60px] items-center justify-center rounded-[11px] bg-white shadow-[0_0_8px_rgba(0,0,0,0.15)]">
      <svg width="38" height="34" viewBox="0 0 38 34">
        <path d="M1 17h26M17 6l11 11-11 11M35.500 1v32" stroke="#666" strokeWidth="4" fill="none" />
      </svg>
    </div>
  </div>
);

const VolumePanel: React.FC = () => (
  <div className="relative mr-[13px] ml-3 h-[247px] shrink-0 border-x-2 border-t-2 border-[#ebebeb]">
    <svg className="absolute -top-0.5 -left-[14px]" width="1080" height="248" viewBox="0 0 1080 248">
      <path d="M14 123H1066" stroke="#e4e4e4" strokeWidth="2" strokeDasharray="4 4" />
      {VOLUMES.map((volume, i) => {
        const h = Math.abs(volume);
        const x = 12 + i * 3;
        if (volume > 0) return <rect key={i} x={x} y={246 - h} width="3" height={h} fill={RED} />;
        return (
          <g key={i}>
            <rect x={x} y={246 - h} width="3" height={h} fill="#96b47c" />
            <rect x={x + 1} y={246 - h} width="1" height={h} fill={GREEN} />
          </g>
        );
      })}
      <g transform={`scale(${UNIT_X} ${UNIT_Y})`}>
        <polyline points={VOLUME_MA} stroke="#303030" strokeWidth="8.500" strokeLinejoin="round" fill="none" />
      </g>
    </svg>
    <div className="relative flex items-center pt-2.5 pl-2.5 text-[36px] text-[#333]">
      <div className="mr-3 flex h-12 w-[162px] items-center gap-2.5 rounded-lg bg-[#f2f2f2] pt-0.5 pl-[13px]">
        <span>成交量</span>
        <Caret />
      </div>
      <div className="flex w-[183px] pt-0.5 text-[#dc3636]">
        <span className="w-9">量</span>
        <div className="w-[93px] font-medium">
          <Num className="origin-left scale-x-[0.93]">:111.3</Num>
        </div>
        <span>万</span>
      </div>
      <div className="flex w-[157px] pt-0.5">
        <span>盘后</span>
        <Num className="origin-left scale-x-[0.93]">:100</Num>
      </div>
      <div className="flex w-[215px] pt-0.5">
        <div className="w-[161px]">
          <Num className="origin-left scale-x-[0.95]">M60:25.68</Num>
        </div>
        <span>万</span>
      </div>
      <div className="flex pt-0.5">
        <span>换手率:</span>
        <Num className="origin-left scale-x-[0.93] font-medium text-[#50a8e0]">26.93%</Num>
      </div>
    </div>
  </div>
);

const BiasPanel: React.FC = () => (
  <div className="relative mr-[13px] ml-3 h-[246px] shrink-0 border-2 border-[#ebebeb]">
    <svg className="absolute -top-0.5 -left-[14px]" width="1067" height="246" viewBox="0 0 1067 246">
      <path d="M14 123H1066" stroke="#e4e4e4" strokeWidth="2" strokeDasharray="4 4" />
      <g transform={`translate(0 -258) scale(${UNIT_X} ${UNIT_Y})`} fill="none" strokeWidth="8.500">
        {BIAS_LINES.map((line) => (
          <polyline key={line.name} points={line.points} stroke={line.color} />
        ))}
      </g>
    </svg>
    <div className="relative flex items-center pt-2.5 pl-2.5 text-[36px] text-[#333]">
      <div className="mr-[13px] flex h-12 w-[272px] items-center rounded-lg bg-[#f2f2f2] pt-0.5 pl-[13px]">
        <div className="w-[226px]">
          <Num className="origin-left scale-x-[0.99]">BIAS(6,12,24)</Num>
        </div>
        <Caret />
      </div>
      <div className="w-[228px] pt-0.5">
        <Num className="origin-left scale-x-[0.97]">BIAS1:+17.70</Num>
      </div>
      <div className="w-[230px] pt-0.5 text-[#ec7844]">
        <Num className="origin-left scale-x-[0.97]">BIAS2:+53.28</Num>
      </div>
      <div className="pt-0.5 text-[#c44a80]">
        <Num className="origin-left scale-x-[0.97]">BIAS3:+83.48</Num>
      </div>
    </div>
  </div>
);

const NAV_ITEMS = [
  {
    label: '下单',
    icon: (
      <>
        <path d="M9 2h34q5 0 5 5v36L37 55H9q-5 0-5-5V7q0-5 5-5z" />
        <path d="M10 15.500h32M10 22.500h32M10 29.500h32M10 36.500h22" />
      </>
    ),
  },
  {
    label: '诊股',
    icon: (
      <>
        <rect x="-1" y="11" width="54" height="40" rx="5" />
        <path d="M15 6h22M26 21v20M16 31h20M6 53.500h10M36 53.500h10" />
      </>
    ),
  },
  {
    label: '加自选',
    icon: (
      <>
        <rect x="2" y="5" width="46" height="46" />
        <path d="M25 15v27M12 28.500h26" />
      </>
    ),
  },
  {
    label: '功能',
    icon: (
      <>
        <circle cx="26" cy="28.500" r="24.500" />
        <path d="M15 21.500h22M15 35.500h22" />
      </>
    ),
  },
];

const BottomNav: React.FC = () => (
  <div className="flex h-[153px] shrink-0 flex-col bg-[#252525]">
    <div className="flex h-[143px]">
      <div className="flex w-[248px] flex-col items-center pt-3">
        <svg width="26" height="15" viewBox="0 0 26 15">
          <path d="M13 0l13 15H0z" fill="#b0b0b0" />
        </svg>
        <span className="mt-[22px] text-[35.500px] text-[#8c8c96]">消费电子</span>
        <Num className="mt-[22px] scale-x-[0.96] text-[38px] text-[#d41616]">3.16%</Num>
      </div>
      {NAV_ITEMS.map((item) => (
        <div key={item.label} className="flex w-[208px] flex-col items-center pt-[21px] text-[35.500px] text-[#d6d6d6]">
          <svg className="overflow-visible" width="52" height="57" viewBox="0 0 52 57" fill="none" stroke="#d6d6d6" strokeWidth="2.800">
            {item.icon}
          </svg>
          <span className="mt-3">{item.label}</span>
        </div>
      ))}
    </div>
    <div className="mx-auto h-[7px] w-[432px] rounded-full bg-[#666]" />
  </div>
);

const App: React.FC = () => (
  <div className="flex h-[2392px] w-[1080px] flex-col overflow-hidden bg-white font-['Roboto','Noto_Sans_CJK_SC',sans-serif] leading-none">
    <Header />
    <QuoteSummary />
    <AfterHours />
    <div className="h-3 shrink-0 bg-[#f4f4f4]" />
    <PeriodTabs />
    <MinuteButtons />
    <MaLegend />
    <CandleChart />
    <DateAxis />
    <VolumePanel />
    <div className="h-3 shrink-0" />
    <BiasPanel />
    <div className="mt-1.5 mb-[27px] h-3 shrink-0 bg-[#f4f4f4]" />
    <BottomNav />
  </div>
);

export default App;
